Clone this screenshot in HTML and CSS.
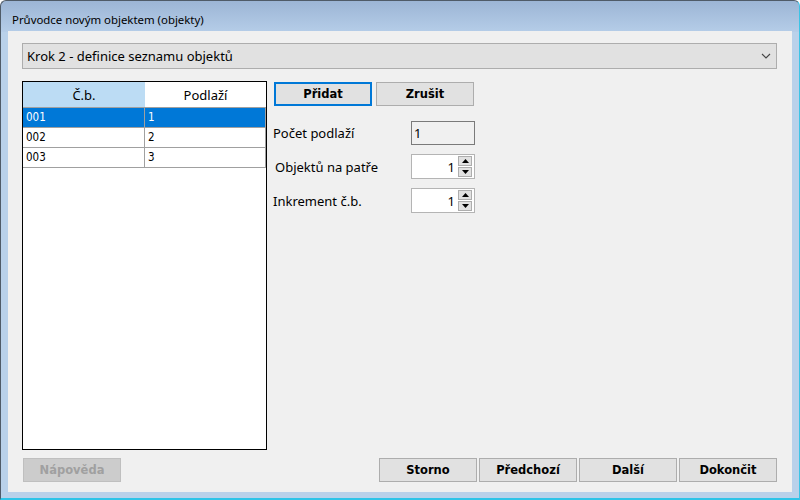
FILE: index.html
```html
<!DOCTYPE html>
<html>
<head>
<meta charset="utf-8">
<title>Průvodce novým objektem</title>
<link rel="stylesheet" href="styles.css">
</head>
<body>
<div class="window">
  <div class="titlebar"><span class="title">Průvodce novým objektem (objekty)</span></div>
  <div class="client">
    <div class="combo">
      <span class="combo-text">Krok 2 - definice seznamu objektů</span>
      <svg class="chev" width="10" height="6" viewBox="0 0 10 6"><path d="M1 1 L5 5 L9 1" fill="none" stroke="#444" stroke-width="1.1"/></svg>
    </div>
    <div class="main">
      <div class="grid">
        <div class="ghead">
          <div class="hcell sel">Č.b.</div>
          <div class="hcell">Podlaží</div>
        </div>
        <div class="grow first selrow"><div class="cell">001</div><div class="cell">1</div></div>
        <div class="grow"><div class="cell">002</div><div class="cell">2</div></div>
        <div class="grow"><div class="cell">003</div><div class="cell">3</div></div>
      </div>
      <div class="panel">
        <div class="btnrow">
          <div class="btn focus">Přidat</div>
          <div class="btn">Zrušit</div>
        </div>
        <div class="fields">
          <div class="label">Počet podlaží</div>
          <div class="ro">1</div>
          <div class="label l2">Objektů na patře</div>
          <div class="spin">
            <span class="val">1</span>
            <div class="spinbtns">
              <div class="sb"><svg width="7" height="4" viewBox="0 0 7 4"><path d="M0 4 L3.5 0 L7 4 Z" fill="#000"/></svg></div>
              <div class="sb"><svg width="7" height="4" viewBox="0 0 7 4"><path d="M0 0 L3.5 4 L7 0 Z" fill="#000"/></svg></div>
            </div>
          </div>
          <div class="label">Inkrement č.b.</div>
          <div class="spin">
            <span class="val">1</span>
            <div class="spinbtns">
              <div class="sb"><svg width="7" height="4" viewBox="0 0 7 4"><path d="M0 4 L3.5 0 L7 4 Z" fill="#000"/></svg></div>
              <div class="sb"><svg width="7" height="4" viewBox="0 0 7 4"><path d="M0 0 L3.5 4 L7 0 Z" fill="#000"/></svg></div>
            </div>
          </div>
        </div>
      </div>
    </div>
    <div class="footer">
      <div class="btn disabled help">Nápověda</div>
      <div class="navbtns">
        <div class="btn">Storno</div>
        <div class="btn">Předchozí</div>
        <div class="btn">Další</div>
        <div class="btn">Dokončit</div>
      </div>
    </div>
  </div>
</div>
</body>
</html>
```
FILE: styles.css
```css
html, body {
  margin: 0;
  padding: 0;
  background: #ffffff;
}

body {
  font-family: "Noto Sans", "DejaVu Sans", sans-serif;
  font-size: 12px;
  color: #000;
}

.window {
  width: 800px;
  height: 500px;
  box-sizing: border-box;
  display: flex;
  flex-direction: column;
  background: linear-gradient(to bottom, #9cb5d5 0, #b5cde8 31px, #b9d1ea 31px);
  border: 1px solid #4f5b68;
  border-right-color: #3cc4e6;
  border-bottom: 2px solid #2ec4e8;
  border-radius: 6px 6px 0 0;
  padding: 0 7px 6px 7px;
}

.titlebar {
  height: 30px;
  box-sizing: border-box;
  padding: 11px 0 0 4px;
  line-height: 16px;
  font-size: 11.4px;
}

.client {
  flex: 1;
  min-height: 0;
  background: #f0f0f0;
  display: flex;
  flex-direction: column;
  padding: 12px 15px 10px 14px;
}

.combo {
  height: 26px;
  box-sizing: border-box;
  border: 1px solid #adadad;
  background: #e1e1e1;
  display: flex;
  align-items: center;
  justify-content: space-between;
  padding: 0 5px 0 4px;
  font-size: 13px;
}

.chev {
  display: block;
}

.main {
  flex: 1;
  min-height: 0;
  display: flex;
  margin-top: 12px;
}

.grid {
  width: 245px;
  box-sizing: border-box;
  border: 1px solid #000;
  background: #fff;
}

.ghead {
  display: grid;
  grid-template-columns: 122px 1fr;
  height: 25px;
}

.hcell {
  display: flex;
  align-items: center;
  justify-content: center;
  font-size: 13px;
}

.hcell.sel {
  background: #bcdcf4;
}

.grow {
  display: grid;
  grid-template-columns: 122px 1fr;
  height: 20px;
  box-sizing: border-box;
  border-bottom: 1px solid #a0a0a0;
}

.grow.first {
  height: 21px;
  border-top: 1px solid #a0a0a0;
}

.cell {
  padding-left: 3px;
  line-height: 19px;
  font-family: "DejaVu Sans Condensed", "DejaVu Sans", sans-serif;
  font-size: 11.5px;
  border-right: 1px solid #a0a0a0;
}

.selrow {
  background: #0078d7;
  color: #fff;
}

.panel {
  margin-left: 6px;
  padding-top: 1px;
  display: flex;
  flex-direction: column;
}

.btnrow {
  display: flex;
  gap: 4px;
  padding-left: 1px;
}

.btn {
  width: 98px;
  height: 24px;
  box-sizing: border-box;
  border: 1px solid #adadad;
  background: #e1e1e1;
  display: flex;
  align-items: center;
  justify-content: center;
  font-family: "DejaVu Sans", sans-serif;
  font-weight: bold;
  font-size: 11.5px;
}

.btn.focus {
  border: 2px solid #0078d7;
}

.btn.disabled {
  background: #cccccc;
  border-color: #bfbfbf;
  color: #a0a0a0;
}

.fields {
  margin-top: 15px;
  display: grid;
  grid-template-columns: 138px 64px;
  grid-template-rows: 24px 25px 25px;
  row-gap: 9px;
  align-items: center;
}

.label {
  font-size: 13px;
}

.label.l2 {
  padding-left: 2px;
}

.ro {
  height: 24px;
  box-sizing: border-box;
  border: 1px solid #7a7a7a;
  background: #f0f0f0;
  padding-left: 2px;
  line-height: 22px;
  font-size: 13px;
}

.spin {
  height: 25px;
  box-sizing: border-box;
  border: 1px solid #b4b4b4;
  background: #fff;
  display: flex;
  align-items: center;
  justify-content: flex-end;
  padding-right: 2px;
}

.val {
  margin-right: 3px;
  font-size: 13px;
}

.spinbtns {
  display: flex;
  flex-direction: column;
  gap: 1px;
}

.sb {
  width: 14px;
  height: 10px;
  box-sizing: border-box;
  border: 1px solid #adadad;
  background: #e1e1e1;
  display: flex;
  align-items: center;
  justify-content: center;
}

.sb svg {
  display: block;
}

.footer {
  margin-top: 8px;
  height: 24px;
  display: flex;
  justify-content: space-between;
}

.help {
  margin-left: 1px;
}

.navbtns {
  display: flex;
  gap: 2px;
}
```
